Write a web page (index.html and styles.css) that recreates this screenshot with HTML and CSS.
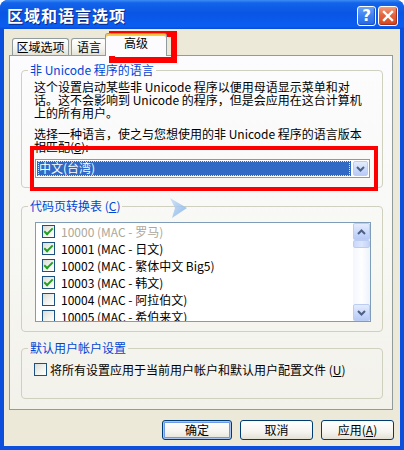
FILE: index.html
```html
<!DOCTYPE html>
<html lang="zh-CN">
<head>
  <meta charset="UTF-8">
  <title>区域和语言选项</title>
  <link rel="stylesheet" href="styles.css">
</head>
<body>

  <div class="window">
    <div class="titlebar">
      <span class="title">区域和语言选项</span>
      <div class="title-btns">
        <button class="tb-btn tb-help" aria-label="帮助">?</button>
        <button class="tb-btn tb-close" aria-label="关闭">
          <svg width="12" height="12" viewBox="0 0 12 12"><path d="M2 2 L10 10 M10 2 L2 10" stroke="#fff" stroke-width="2.4" stroke-linecap="square"/></svg>
        </button>
      </div>
    </div>

    <div class="client">
      <div class="tabs">
        <div class="tab tab-region">区域选项</div>
        <div class="tab tab-lang">语言</div>
        <div class="tab tab-adv active">高级</div>
      </div>

      <div class="panel">
        <fieldset class="group g-lang">
          <legend>非 Unicode 程序的语言</legend>
          <p>这个设置启动某些非 Unicode 程序以便用母语显示菜单和对<br>话。这不会影响到 Unicode 的程序，但是会应用在这台计算机<br>上的所有用户。</p>
          <p class="p2">选择一种语言，使之与您想使用的非 Unicode 程序的语言版本<br>相匹配(<u>S</u>):</p>
          <div class="combo">
            <span class="combo-value"><span class="focus">中文(台湾)</span></span>
            <span class="combo-btn">
              <svg width="9" height="6" viewBox="0 0 9 6"><path d="M1 1 L4.5 4.5 L8 1" fill="none" stroke="#4D6185" stroke-width="2"/></svg>
            </span>
          </div>
        </fieldset>

        <fieldset class="group g-code">
          <legend>代码页转换表 (<u>C</u>)</legend>
          <div class="listbox">
            <ul class="list">
              <li class="disabled"><span class="chk on"></span>10000 (MAC - 罗马)</li>
              <li><span class="chk on"></span>10001 (MAC - 日文)</li>
              <li><span class="chk on"></span>10002 (MAC - 繁体中文 Big5)</li>
              <li><span class="chk on"></span>10003 (MAC - 韩文)</li>
              <li><span class="chk"></span>10004 (MAC - 阿拉伯文)</li>
              <li><span class="chk"></span>10005 (MAC - 希伯来文)</li>
            </ul>
            <div class="scrollbar">
              <span class="sb-btn">
                <svg width="9" height="6" viewBox="0 0 9 6"><path d="M1 5 L4.5 1.5 L8 5" fill="none" stroke="#4D6185" stroke-width="2"/></svg>
              </span>
              <span class="sb-thumb"></span>
              <span class="sb-track"></span>
              <span class="sb-btn">
                <svg width="9" height="6" viewBox="0 0 9 6"><path d="M1 1 L4.5 4.5 L8 1" fill="none" stroke="#4D6185" stroke-width="2"/></svg>
              </span>
            </div>
          </div>
        </fieldset>

        <fieldset class="group g-user">
          <legend>默认用户帐户设置</legend>
          <label class="chk-row"><span class="chk"></span>将所有设置应用于当前用户帐户和默认用户配置文件 (<u>U</u>)</label>
        </fieldset>
      </div>

      <div class="buttons">
        <button class="btn btn-ok">确定</button>
        <button class="btn">取消</button>
        <button class="btn">应用(<u>A</u>)</button>
      </div>
    </div>

    <!-- 红色标注框 -->
    <div class="mark mark-tab"></div>
    <div class="mark mark-combo"></div>

    <svg class="pointer" width="20" height="22" viewBox="0 0 20 22">
      <defs>
        <linearGradient id="pg" x1="0" y1="0" x2="1" y2="1">
          <stop offset="0" stop-color="#c9def7"/>
          <stop offset="1" stop-color="#7fb0e6"/>
        </linearGradient>
      </defs>
      <path d="M2 1 L19 11 L4 21 L7 11 Z" fill="url(#pg)" opacity="0.85"/>
    </svg>
  </div>

</body>
</html>
```

FILE: styles.css
```css
* {
  box-sizing: border-box;
}
body {
  margin: 0;
  background: #fff;
  font-family: "Noto Sans CJK SC", "Noto Sans", sans-serif;
  font-size: 12px;
  color: #000;
}

.window {
  position: relative;
  width: 404px;
  height: 450px;
  display: flex;
  flex-direction: column;
  background: #0B4FDC;
  border-radius: 8px 8px 0 0;
  overflow: hidden;
}

/* 标题栏 */
.titlebar {
  flex: none;
  height: 29px;
  display: flex;
  align-items: center;
  justify-content: space-between;
  padding: 0 6px 0 7px;
  background: linear-gradient(180deg, #3d8cf5 0%, #1363ea 10%, #0a56e4 45%, #0a5cf0 85%, #0b5ded 92%, #0a4ad9 100%);
}
.title {
  color: #fff;
  font-weight: bold;
  font-size: 16px;
  letter-spacing: 1px;
  line-height: 20px;
  text-shadow: 1px 1px 0 #0a2a8a;
}
.title-btns {
  display: flex;
  gap: 2px;
  margin-top: 3px;
}
.tb-btn {
  width: 20px;
  height: 20px;
  padding: 0;
  border: 1px solid #fff;
  border-radius: 3px;
  display: flex;
  align-items: center;
  justify-content: center;
  color: #fff;
  font-family: "DejaVu Sans", sans-serif;
  font-weight: bold;
  font-size: 15px;
  line-height: 1;
}
.tb-help {
  width: 19px;
  background: linear-gradient(180deg, #6aa3f8 0%, #3b7ff2 50%, #2a6ae6 100%);
  box-shadow: inset -1px -1px 1px #1b4fc4;
}
.tb-close {
  background: linear-gradient(180deg, #f29b7c 0%, #e4643f 45%, #d4471f 100%);
  box-shadow: inset -1px -1px 1px #a8301a;
}

.client {
  flex: 1;
  margin: 0 4px 4px 4px;
  background: #ECE9D8;
  padding: 4px 7px 0 5px;
  display: flex;
  flex-direction: column;
}

/* 选项卡 */
.tabs {
  display: flex;
  align-items: flex-end;
  height: 22px;
  padding-left: 3px;
}
.tab {
  position: relative;
  height: 17px;
  border: 1px solid #919B9C;
  border-bottom: none;
  border-radius: 3px 3px 0 0;
  background: linear-gradient(180deg, #ffffff 0%, #f3f3ef 60%, #e3e1d7 100%);
  text-align: center;
  line-height: 16px;
}
.tab-region {
  width: 57px;
}
.tab-lang {
  width: 36px;
  margin-left: 2px;
}
.tab-adv {
  width: 62px;
  margin-left: -2px;
}
.tab.active {
  height: 23px;
  margin-bottom: -1px;
  z-index: 2;
  background: #FCFCFE;
  border-top: 1px solid #E68B2C;
  box-shadow: inset 0 2px 0 #FFC73C;
  line-height: 14px;
  padding-top: 2px;
}

.panel {
  height: 355px;
  border: 1px solid #919B9C;
  background: linear-gradient(180deg, #FCFCFE 0%, #F7F7F3 60%, #F2F1EA 100%);
  padding: 7px 9px 0 11px;
}

/* 分组框 */
.group {
  margin: 0;
  border: 1px solid #D0D0BF;
  border-radius: 4px;
  padding: 3px 10px 9px 12px;
  min-width: 0;
}
.group legend {
  padding: 0 2px;
  margin-left: -6px;
  color: #0046D5;
  line-height: 14px;
}
.group p {
  margin: 0;
  line-height: 13px;
  white-space: nowrap;
}
.group p.p2 {
  margin-top: 8px;
}

.combo {
  display: flex;
  height: 19px;
  margin: 6px 2px 0 1px;
  border: 1px solid #7F9DB9;
  background: #fff;
  padding: 1px;
}
.combo-value {
  flex: 1;
  background: #316AC5;
  color: #fff;
  margin-right: 2px;
  padding: 0 1px;
}
.combo-value .focus {
  display: block;
  height: 100%;
  line-height: 13px;
  outline: 1px dotted #d8e4f8;
  outline-offset: -1px;
  padding-left: 1px;
}
.combo-btn,
.sb-btn {
  width: 15px;
  display: flex;
  align-items: center;
  justify-content: center;
  border: 1px solid #BBCEF1;
  border-radius: 2px;
  background: linear-gradient(180deg, #e4ecfd 0%, #c8d8fb 60%, #b8caf5 100%);
}

.g-code {
  margin-top: 11px;
  padding-top: 9px;
}
.listbox {
  display: flex;
  height: 100px;
  margin-left: 1px;
  margin-right: 1px;
  border: 1px solid #7F9DB9;
  background: #fff;
  overflow: hidden;
}
.list {
  flex: 1;
  list-style: none;
  margin: 0;
  padding: 0 0 0 6px;
}
.list li {
  height: 17px;
  display: flex;
  align-items: center;
  white-space: nowrap;
}
.list li.disabled {
  color: #ACA899;
}

/* 复选框 */
.chk {
  position: relative;
  flex: none;
  width: 13px;
  height: 13px;
  margin-right: 6px;
  border: 1px solid #1C5180;
  background: linear-gradient(135deg, #dcdcd7 0%, #f4f4f0 60%, #ffffff 100%);
}
.chk.on::after {
  content: "";
  position: absolute;
  left: 3px;
  top: 0px;
  width: 3px;
  height: 7px;
  border-right: 2px solid #21A121;
  border-bottom: 2px solid #21A121;
  transform: rotate(45deg);
}

.scrollbar {
  flex: none;
  width: 17px;
  display: flex;
  flex-direction: column;
  background: linear-gradient(90deg, #f3f6fd 0%, #fefefe 50%, #eef2fb 100%);
}
.scrollbar .sb-btn {
  width: 17px;
  height: 17px;
}
.sb-thumb {
  height: 8px;
  border: 1px solid #BBCEF1;
  border-radius: 2px;
  background: linear-gradient(90deg, #c9d8fb 0%, #dbe5fd 50%, #c4d3f8 100%);
}
.sb-track {
  flex: 1;
}

.g-user {
  margin-top: 9px;
  padding-top: 8px;
  padding-bottom: 22px;
}
.chk-row {
  display: flex;
  align-items: center;
  height: 13px;
  white-space: nowrap;
}
.chk-row .chk {
  margin-right: 3px;
}

/* 底部按钮 */
.buttons {
  display: flex;
  justify-content: flex-end;
  gap: 8px;
  margin-top: 10px;
  margin-right: -1px;
}
.btn {
  width: 73px;
  height: 20px;
  padding: 0;
  border: 1px solid #003C74;
  border-radius: 3px;
  background: linear-gradient(180deg, #ffffff 0%, #f5f4ef 60%, #e3e1d6 100%);
  font-family: inherit;
  font-size: 12px;
  color: #000;
  line-height: 16px;
}
.btn-ok {
  width: 70px;
  box-shadow: inset 0 0 0 1px #aac4f1, inset 0 0 0 2px #6f98e6;
}

.mark {
  position: absolute;
  border: solid #F00;
  pointer-events: none;
}
.mark-tab {
  left: 109px;
  top: 31px;
  width: 68px;
  height: 32px;
  border-width: 6px;
}
.mark-combo {
  left: 30px;
  top: 146px;
  width: 348px;
  height: 45px;
  border-width: 4px;
}

.pointer {
  position: absolute;
  left: 168px;
  top: 197px;
}
```
